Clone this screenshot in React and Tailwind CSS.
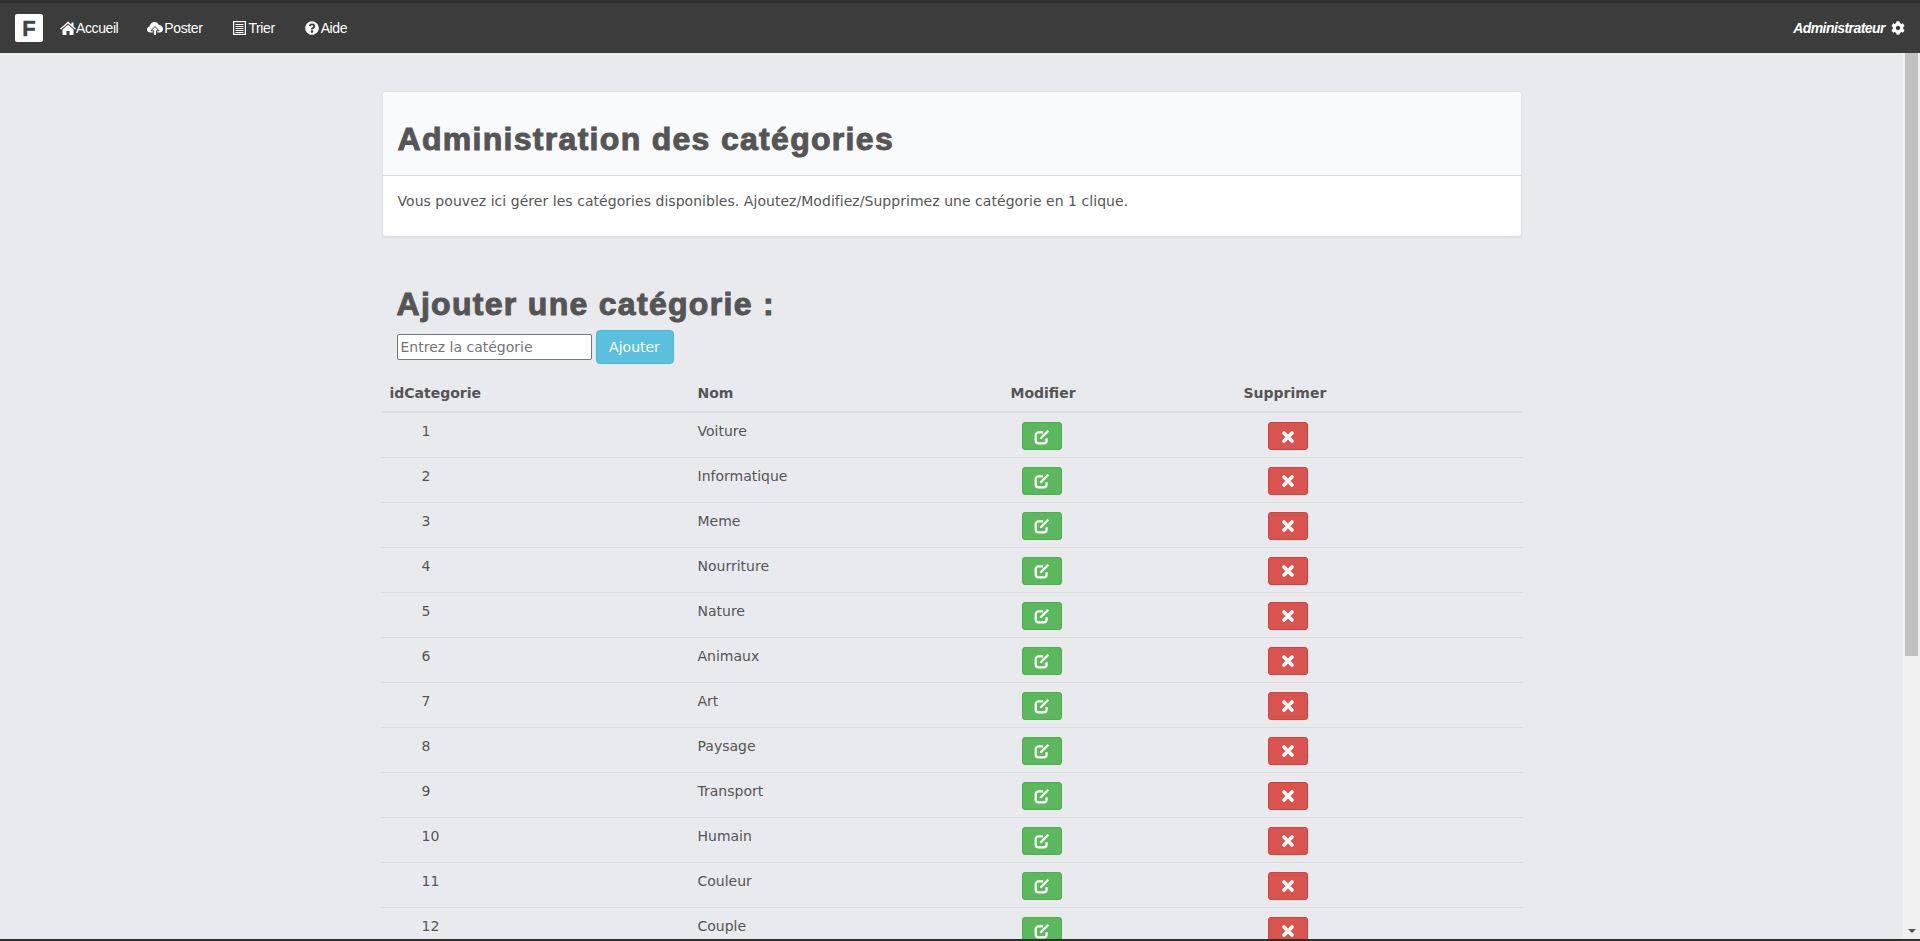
import React from "react";
import { FaQuestionCircle, FaCog } from "react-icons/fa";

const categories = [
	"Voiture",
	"Informatique",
	"Meme",
	"Nourriture",
	"Nature",
	"Animaux",
	"Art",
	"Paysage",
	"Transport",
	"Humain",
	"Couleur",
	"Couple",
];

const HomeIcon = () => (
	<svg viewBox="0 0 16 14" className="w-[16px] h-[14px]" fill="currentColor">
		<path d="M8 0.5 L11.5 3.6 V1.5 H13.5 V5.4 L16 7.7 L15 8.6 L8 2.6 L1 8.6 L0 7.7 Z" />
		<path d="M8 3.8 L13.5 8.5 V14 H9.5 V10 H6.5 V14 H2.5 V8.5 Z" />
	</svg>
);

const CloudIcon = () => (
	<svg viewBox="0 0 16 15" className="w-[16px] h-[15px] mr-[1px]">
		<path
			fill="currentColor"
			d="M3.5 11.5 C1.3 11.5 0 10 0 8.4 C0 6.8 1.1 5.6 2.6 5.4 C3 3 5 1 7.6 1 C9.6 1 11.2 2.2 11.9 3.9 C14.2 4 16 5.8 16 7.9 C16 9.9 14.5 11.5 12.5 11.5 Z"
		/>
		<path fill="currentColor" stroke="#3c3c3c" strokeWidth="1" d="M8 5.5 L12 9.8 H9.6 V14.5 H6.4 V9.8 H4 Z" />
	</svg>
);

const ListIcon = () => (
	<svg viewBox="0 0 13 14" className="w-[13px] h-[14px] mr-[2px]" fill="none" stroke="currentColor">
		<rect x="0.6" y="0.6" width="11.8" height="12.8" strokeWidth="1.2" />
		<path d="M2.5 3.5 H10.5 M2.5 5.5 H10.5 M2.5 7.5 H10.5 M2.5 9.5 H10.5 M2.5 11.5 H10.5" strokeWidth="1.1" />
	</svg>
);

// crayon dans un carre arrondi, comme fa-pencil-square-o
const EditIcon = () => (
	<svg viewBox="0 0 14 14" className="w-[16px] h-[16px] mt-[1px]" fill="none" stroke="currentColor" strokeWidth="2">
		<path d="M11 8 V10 A2.5 2.5 0 0 1 8.5 12.5 H4 A2.5 2.5 0 0 1 1.5 10 V5.5 A2.5 2.5 0 0 1 4 3 H8" />
		<path d="M5.5 8.5 L12.5 1.5" />
	</svg>
);

const CrossIcon = () => (
	<svg viewBox="0 0 14 14" className="w-[14px] h-[14px] mt-[1px]" fill="none" stroke="currentColor" strokeWidth="3.6" strokeLinecap="round">
		<path d="M3 3 L11 11 M11 3 L3 11" />
	</svg>
);

const NavLink = ({ icon, label, className }) => (
	<a href="#" className={"flex items-center text-[14px] tracking-[-0.4px] text-white " + className}>
		{icon}
		<span>{label}</span>
	</a>
);

const App = () => {
	return (
		<div className="h-[941px] overflow-hidden flex flex-col bg-[#e9eaee] text-[#555] font-['DejaVu_Sans',sans-serif]">
			<nav className="h-[53px] shrink-0 flex items-center bg-[#3c3c3c] border-t-[3px] border-[#2e2e2e] pl-[15px] pr-[15px] font-['Liberation_Sans',sans-serif]">
				<div className="w-[28px] h-[28px] bg-white rounded-[2px] flex items-center justify-center text-[22px] font-bold text-[#444] [-webkit-text-stroke:0.5px_#444]">
					F
				</div>
				<NavLink className="ml-[17px]" icon={<HomeIcon />} label="Accueil" />
				<NavLink className="ml-[29px]" icon={<CloudIcon />} label="Poster" />
				<NavLink className="ml-[31px]" icon={<ListIcon />} label="Trier" />
				<NavLink className="ml-[30px]" icon={<FaQuestionCircle className="w-[14px] h-[14px] mr-[2px]" />} label="Aide" />
				<div className="ml-auto flex items-center text-white text-[14px] italic font-bold tracking-[-0.55px]">
					<span>Administrateur</span>
					<FaCog className="w-[14px] h-[14px] ml-[6px]" />
				</div>
			</nav>

			<div className="flex-1 min-h-0 flex">
				<main className="flex-1 min-w-0 overflow-hidden flex flex-col items-center">
					<div className="w-[1142px] pt-[38px] pl-[1px] pr-[1px]">
						<section className="bg-white rounded-[4px] border border-[#dfe0e4] shadow-[0_1px_1px_rgba(0,0,0,0.05)] overflow-hidden">
							<div className="h-[84px] bg-[#f9fafc] border-b border-[#dcdde1] pl-[15px] pt-[28px]">
								<h1 className="text-[32px] leading-[38px] font-bold font-['Liberation_Sans',sans-serif] tracking-[1.3px] [-webkit-text-stroke:1px_#555]">
									Administration des catégories
								</h1>
							</div>
							<p className="h-[60px] pl-[15px] pt-[15px] text-[14px] leading-[20px] tracking-[0.04px]">
								Vous pouvez ici gérer les catégories disponibles. Ajoutez/Modifiez/Supprimez une catégorie en 1 clique.
							</p>
						</section>

						<h2 className="mt-[48px] ml-[15px] text-[32px] leading-[38px] font-bold font-['Liberation_Sans',sans-serif] tracking-[1.3px] [-webkit-text-stroke:1px_#555]">
							Ajouter une catégorie :
						</h2>
						<div className="ml-[15px] mt-[7px] flex items-center">
							<input
								className="w-[195px] h-[26px] bg-white border border-[#767676] rounded-[2px] px-[3px] text-[14px] text-[#555] placeholder:text-[#757575]"
								placeholder="Entrez la catégorie"
							/>
							<button className="ml-[4px] w-[78px] h-[34px] bg-[#5bc0de] border border-[#46b8da] rounded-[4px] text-[14px] text-white">
								Ajouter
							</button>
						</div>

						<table className="-ml-[1px] mt-[11px] w-[1142px] table-fixed text-[14px] leading-[20px]">
							<thead>
								<tr className="h-[37px] border-b-2 border-[#dddddd] font-bold text-left">
									<th className="w-[308px] pl-[9px]">idCategorie</th>
									<th className="w-[308px] pl-[9px]">Nom</th>
									<th className="w-[244px] pl-[14px]">Modifier</th>
									<th className="pl-[3px]">Supprimer</th>
								</tr>
							</thead>
							<tbody>
								{categories.map((name, index) => (
									<tr key={name} className="h-[45px] border-b border-[#dddddd] align-top">
										<td className="pl-[41px] pt-[8px]">{index + 1}</td>
										<td className="pl-[9px] pt-[8px]">{name}</td>
										<td className="pl-[25px] pt-[9px]">
											<button className="w-[40px] h-[28px] flex items-center justify-center bg-[#5cb85c] border border-[#4cae4c] rounded-[3px] text-white">
												<EditIcon />
											</button>
										</td>
										<td className="pl-[27px] pt-[9px]">
											<button className="w-[40px] h-[28px] flex items-center justify-center bg-[#d9534f] border border-[#d43f3a] rounded-[3px] text-white">
												<CrossIcon />
											</button>
										</td>
									</tr>
								))}
							</tbody>
						</table>
					</div>
				</main>
				<div className="w-[17px] shrink-0 bg-[#f1f1f1] flex flex-col">
					<div className="h-[603px] mx-[2px] bg-[#c1c1c1]" />
					<div className="mt-auto h-[17px] flex items-center justify-center">
						<div className="w-0 h-0 border-l-[4px] border-r-[4px] border-t-[4px] border-l-transparent border-r-transparent border-t-[#505050]" />
					</div>
				</div>
			</div>
			<div className="h-[2px] shrink-0 bg-[#2e2e2e]" />
		</div>
	);
};

export default App;
